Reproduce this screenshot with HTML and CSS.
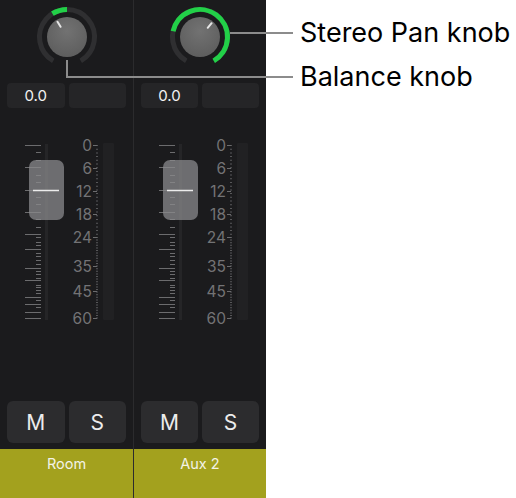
FILE: index.html
```html
<!DOCTYPE html>
<html lang="en">

<head>
    <meta charset="UTF-8">
    <title>Mixer knobs</title>
    <link rel="stylesheet" href="styles.css">
</head>

<body>
    <svg class="defs" width="0" height="0">
        <defs>
            <radialGradient id="knob-face" cx="50%" cy="35%" r="65%">
                <stop offset="0" stop-color="#727272" />
                <stop offset="1" stop-color="#5e5e5e" />
            </radialGradient>
            <symbol id="fader-scale" viewBox="0 135 133 195">
                <!-- fader track and ticks -->
                <rect x="45" y="144" width="3" height="176" fill="#252527" />
                <path class="tick" d="M25 145.5h16M25 167.5h16M25 190.5h16M25 212.5h16M25 234.5h16M25 249.5h16M25 268.5h16M25 280.5h16M25 297.5h16M25 304.5h16M25 312.5h16M25 318.5h16" />
                <path class="tick" d="M36 152.5h5M36 160.5h5M36 175.5h5M36 182.5h5M36 197.5h5M36 204.5h5M36 219.5h5M36 227.5h5M36 237.5h5M36 242.5h5M36 245.5h5M36 253.5h5M36 256.5h5M36 260.5h5M36 264.5h5M36 271.5h5M36 274.5h5M36 278.5h5M36 285.5h5M36 287.5h5M36 290.5h5M36 293.5h5M36 300.5h5M36 307.5h5" />
                <rect class="cap" x="29" y="160" width="35" height="60" rx="7" />
                <line x1="33" y1="190.5" x2="59" y2="190.5" stroke="#ececec" stroke-width="1.5" />
                <!-- dB labels -->
                <g class="db">
                    <text x="92" y="145">0</text>
                    <text x="92" y="168">6</text>
                    <text x="92" y="191">12</text>
                    <text x="92" y="214">18</text>
                    <text x="92" y="237">24</text>
                    <text x="92" y="266">35</text>
                    <text x="92" y="291">45</text>
                    <text x="92" y="318">60</text>
                </g>
                <path class="tick" d="M93 145.5h4M93 168.5h4M93 191.5h4M93 214.5h4M93 237.5h4M93 266.5h4M93 291.5h4M93 318.5h4" />
                <line class="dots" x1="97" y1="145" x2="97" y2="237" stroke-dasharray="1 2.7" />
                <line class="dots" x1="97" y1="237" x2="97" y2="320" stroke-dasharray="1 1.6" />
                <!-- level meter -->
                <rect x="103" y="143" width="11" height="177" rx="1" fill="#212123" />
            </symbol>
        </defs>
    </svg>

    <div class="page">
        <main class="mixer">
            <section class="strip">
                <svg class="knob" width="66" height="66" viewBox="-33 -33 66 66">
                    <path class="ring" d="M-13.75 23.82A27.5 27.5 0 1 1 13.75 23.82" />
                    <path class="ring-on" d="M-14.57 -23.32A27.5 27.5 0 0 1 0 -27.5" />
                    <circle r="20" fill="url(#knob-face)" />
                    <line class="pointer" x1="-6.4" y1="-10.2" x2="-9.5" y2="-15.3" />
                </svg>
                <div class="values">
                    <div class="value">0.0</div>
                    <div class="value"></div>
                </div>
                <svg class="fader" width="133" height="195"><use href="#fader-scale" /></svg>
                <div class="buttons">
                    <button class="btn">M</button>
                    <button class="btn">S</button>
                </div>
                <div class="name">Room</div>
            </section>
            <section class="strip">
                <svg class="knob" width="66" height="66" viewBox="-33 -33 66 66">
                    <path class="ring" d="M-13.75 23.82A27.5 27.5 0 1 1 13.75 23.82" />
                    <path class="ring-on" d="M-26.9 -5.72A27.5 27.5 0 1 1 13.75 23.82" />
                    <circle r="20" fill="url(#knob-face)" />
                    <line class="pointer" x1="7.7" y1="-9.2" x2="11.6" y2="-13.8" />
                </svg>
                <div class="values">
                    <div class="value">0.0</div>
                    <div class="value"></div>
                </div>
                <svg class="fader" width="133" height="195"><use href="#fader-scale" /></svg>
                <div class="buttons">
                    <button class="btn">M</button>
                    <button class="btn">S</button>
                </div>
                <div class="name">Aux 2</div>
            </section>
        </main>

        <aside class="callouts">
            <p class="label">Stereo Pan knob</p>
            <p class="label">Balance knob</p>
        </aside>

        <svg class="leaders" width="516" height="498">
            <path d="M230 33H293" />
            <path d="M67 60V77H293" />
        </svg>
    </div>
</body>

</html>
```

FILE: styles.css
```css
body {
    margin: 0;
    background-color: white;
    font-family: Inter, "Liberation Sans", sans-serif;
}

.defs {
    position: absolute;
}

.page {
    position: relative;
    display: flex;
    width: 516px;
    height: 498px;
}

.mixer {
    display: flex;
    width: 266px;
    height: 498px;
    background-color: #1b1b1d;
}

.strip {
    display: flex;
    flex-direction: column;
    align-items: center;
    width: 133px;
}

.strip + .strip {
    width: 132px;
    border-left: 1px solid #2b2b2d;
}

.knob {
    margin-top: 4px;
}

.ring {
    fill: none;
    stroke: #2f2f31;
    stroke-width: 5;
}

.ring-on {
    fill: none;
    stroke: #22d048;
    stroke-width: 5;
}

.pointer {
    stroke: #e6e6e6;
    stroke-width: 2;
    stroke-linecap: round;
}

.values {
    display: flex;
    gap: 4px;
    align-self: stretch;
    margin-top: 13px;
    padding: 0 7px;
}

.value {
    flex: 1;
    height: 25px;
    border-radius: 4px;
    background-color: #252527;
    color: #f2f2f2;
    font-size: 15px;
    line-height: 25px;
    text-align: center;
}

.fader {
    margin-top: 27px;
}

.tick {
    stroke: #6c6c6e;
    stroke-width: 1;
}

.cap {
    fill: #8a8a8c;
    opacity: 0.75;
}

.db text {
    fill: #737375;
    font-family: Inter, "Liberation Sans", sans-serif;
    font-size: 15.5px;
    text-anchor: end;
    dominant-baseline: central;
}

.dots {
    stroke: #6c6c6e;
    stroke-width: 1.5;
}

.buttons {
    display: flex;
    gap: 4px;
    align-self: stretch;
    margin-top: auto;
    padding: 0 7px;
}

.btn {
    flex: 1;
    height: 42px;
    border: 0;
    border-radius: 6px;
    background-color: #2c2c2e;
    color: #ececec;
    font-family: Inter, "Liberation Sans", sans-serif;
    font-size: 21px;
    padding: 0;
}

.name {
    align-self: stretch;
    height: 49px;
    margin-top: 6px;
    padding-top: 6px;
    box-sizing: border-box;
    background-color: #a3a11e;
    color: #f3f3e6;
    font-size: 14.5px;
    line-height: 17px;
    text-align: center;
}

.callouts {
    padding: 11px 0 0 34px;
}

.label {
    margin: 0;
    color: black;
    font-size: 27px;
    line-height: 44px;
}

.leaders {
    position: absolute;
    top: 0;
    left: 0;
    pointer-events: none;
}

.leaders path {
    fill: none;
    stroke: #8c8c8c;
    stroke-width: 2;
}
```
